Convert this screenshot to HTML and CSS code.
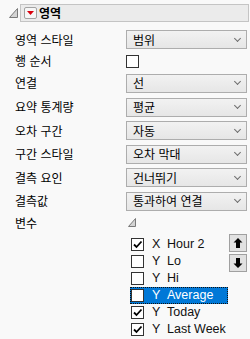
FILE: index.html
```html
<!DOCTYPE html>
<html lang="ko">
<head>
    <meta charset="UTF-8">
    <meta name="viewport" content="width=device-width, initial-scale=1.0">
    <title>영역</title>
    <link rel="stylesheet" href="styles.css">
</head>
<body>

<div class="header">
  <svg class="corner" width="9" height="10" viewBox="0 0 9 10">
    <polygon points="0.5,9.5 8.5,9.5 8.5,0.5" fill="#d4d4d4" stroke="#7a7a7a" stroke-width="1"/>
  </svg>
  <div class="titlebox">
    <span class="redbtn">
      <svg width="7" height="4" viewBox="0 0 7 4"><polygon points="0,0 7,0 3.5,4" fill="#d9000d"/></svg>
    </span>
    <span class="title">영역</span>
  </div>
</div>

<div class="form">
  <div class="label">영역 스타일</div>
  <div class="select"><span>범위</span><i class="chev"></i></div>

  <div class="label">행 순서</div>
  <div class="checkrow"><span class="box"></span></div>

  <div class="label">연결</div>
  <div class="select"><span>선</span><i class="chev"></i></div>

  <div class="label">요약 통계량</div>
  <div class="select"><span>평균</span><i class="chev"></i></div>

  <div class="label">오차 구간</div>
  <div class="select"><span>자동</span><i class="chev"></i></div>

  <div class="label">구간 스타일</div>
  <div class="select"><span>오차 막대</span><i class="chev"></i></div>

  <div class="label">결측 요인</div>
  <div class="select"><span>건너뛰기</span><i class="chev"></i></div>

  <div class="label">결측값</div>
  <div class="select"><span>통과하여 연결</span><i class="chev"></i></div>

  <div class="label short">변수</div>
  <div class="short">
    <svg class="corner small" width="8" height="9" viewBox="0 0 8 9">
      <polygon points="0.5,8.5 7.5,8.5 7.5,0.5" fill="#d4d4d4" stroke="#7a7a7a" stroke-width="1"/>
    </svg>
  </div>

  <div class="vars">
    <div class="list">
      <div class="item"><span class="box checked"></span><span class="role">X</span>Hour 2</div>
      <div class="item"><span class="box"></span><span class="role">Y</span>Lo</div>
      <div class="item"><span class="box"></span><span class="role">Y</span>Hi</div>
      <div class="item selected"><span class="box"></span><span class="role">Y</span>Average</div>
      <div class="item"><span class="box checked"></span><span class="role">Y</span>Today</div>
      <div class="item"><span class="box checked"></span><span class="role">Y</span>Last Week</div>
    </div>
    <div class="moves">
      <div class="mbtn">
        <svg width="16" height="16" viewBox="0 0 16 16"><path d="M8 3 L12.5 7.5 H10 V13 H6 V7.5 H3.5 Z" fill="#000"/></svg>
      </div>
      <div class="mbtn">
        <svg width="16" height="16" viewBox="0 0 16 16"><path d="M8 13 L12.5 8.5 H10 V3 H6 V8.5 H3.5 Z" fill="#000"/></svg>
      </div>
    </div>
  </div>
</div>

</body>
</html>
```

FILE: styles.css
```css
body {
  margin: 0;
  background: #f9f9f9;
  font-family: "Noto Sans CJK KR", "Liberation Sans", sans-serif;
  font-size: 12px;
  color: #000;
}

.header {
  display: flex;
  align-items: center;
  padding: 4px 1px 0 9px;
}

.corner {
  display: block;
}

.titlebox {
  flex: 1;
  height: 18px;
  box-sizing: border-box;
  margin-left: 2px;
  border: 1px solid #c4c4c4;
  background: #ebebeb;
  display: flex;
  align-items: center;
  padding-left: 3px;
}

.redbtn {
  width: 13px;
  height: 12px;
  box-sizing: border-box;
  border: 1px solid #a3a3a3;
  border-radius: 2px;
  background: #f6f6f6;
  display: flex;
  align-items: center;
  justify-content: center;
}

.title {
  font-weight: bold;
  margin-left: 2px;
  line-height: 16px;
}

.form {
  display: grid;
  grid-template-columns: 112px 121px;
  row-gap: 4.6px;
  padding-left: 14px;
  margin-top: 8px;
}

.label {
  display: flex;
  align-items: center;
  padding-left: 1px;
  line-height: 14px;
}

.select {
  height: 19px;
  box-sizing: border-box;
  border: 1px solid #adadad;
  background: linear-gradient(#f2f2f2, #e6e6e6);
  display: flex;
  align-items: center;
  justify-content: space-between;
  padding: 0 6px 0 6px;
  line-height: 16px;
}

.chev {
  width: 4px;
  height: 4px;
  border-right: 1px solid #6e6e6e;
  border-bottom: 1px solid #6e6e6e;
  transform: rotate(45deg);
  margin-top: -3px;
}

.checkrow {
  height: 15.8px;
  padding-top: 0.4px;
  box-sizing: border-box;
}

.short {
  height: 14px;
}

.small {
  margin: 2px 0 0 2px;
}

.box {
  display: inline-block;
  width: 13px;
  height: 13px;
  box-sizing: border-box;
  border: 1px solid #333;
  background: #fff;
  flex: none;
}

.box.checked {
  background: #fff url("data:image/svg+xml,%3Csvg xmlns='http://www.w3.org/2000/svg' width='11' height='11'%3E%3Cpath d='M2 5.5 L4.5 8 L9.5 2.5' fill='none' stroke='%23000' stroke-width='1.8'/%3E%3C/svg%3E") no-repeat center;
}

.vars {
  grid-column: 2;
  display: flex;
  padding-left: 4px;
}

.list {
  width: 98px;
  padding-top: 1.5px;
}

.item {
  height: 17px;
  box-sizing: border-box;
  border: 1px solid transparent;
  display: flex;
  align-items: center;
  font-family: "Liberation Sans", "Noto Sans CJK KR", sans-serif;
  font-size: 12.5px;
  white-space: nowrap;
  color: #111;
}

.role {
  width: 15px;
  margin-left: 8px;
}

.item.selected {
  background: #0078d7;
  border: 1px dotted #111;
  color: #fff;
}

.moves {
  margin-left: 1px;
  display: flex;
  flex-direction: column;
  gap: 2px;
}

.mbtn {
  width: 18px;
  height: 18px;
  box-sizing: border-box;
  border: 1px solid #a0a0a0;
  background: #e1e1e1;
}

.mbtn svg {
  display: block;
}
```
